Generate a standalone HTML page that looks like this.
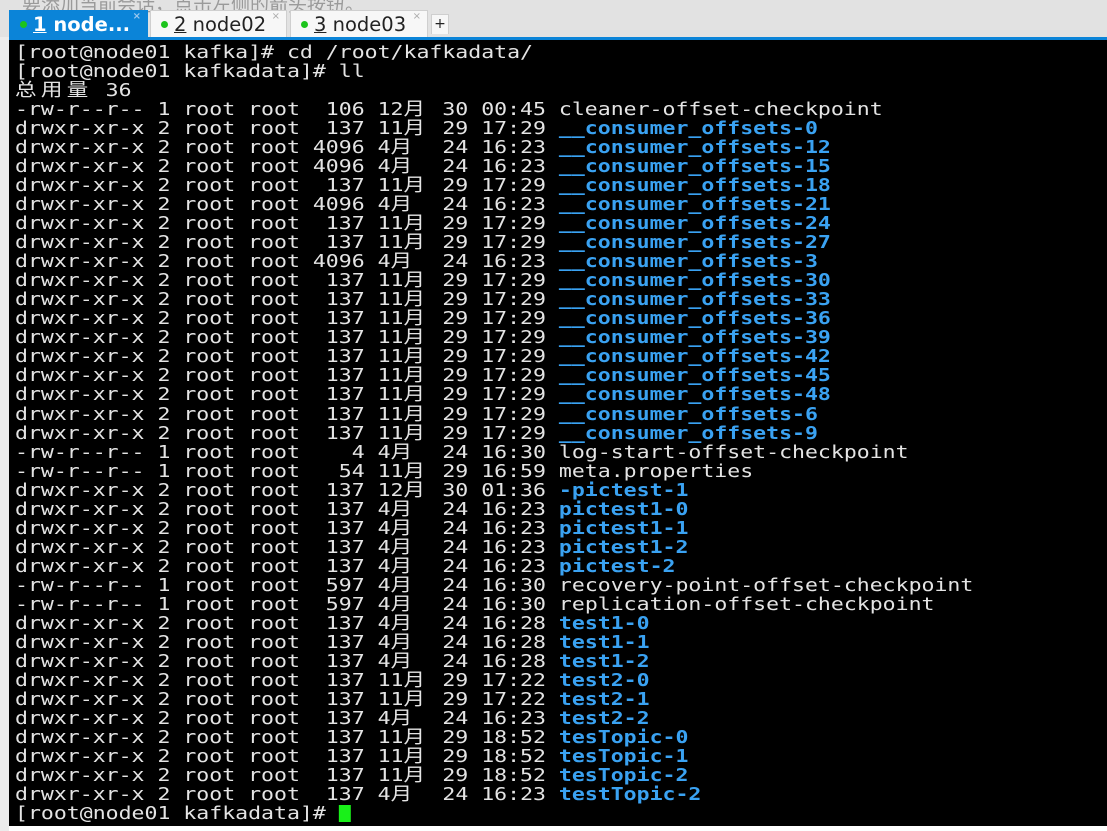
<!DOCTYPE html>
<html><head><meta charset="utf-8"><style>
body{margin:0;width:1107px;height:831px;overflow:hidden;background:#f4f4f4;position:relative;font-family:"DejaVu Sans","Noto Sans CJK SC",sans-serif}
#top{position:absolute;left:0;top:0;width:1107px;height:37px;background:#e2e2e2}
#hint{position:absolute;left:22px;top:-10px;font-size:19px;color:#9a9a9a;white-space:nowrap}
#left{position:absolute;left:0;top:37px;width:9px;height:794px;background:#ececec}
.tab{position:absolute;top:10px;height:27px;background:#f7f7f7;border:1px solid #cfcfcf;border-bottom:none;box-sizing:border-box;font-size:19.5px;color:#222;line-height:28px;white-space:nowrap}
.tab .dot{display:inline-block;width:7px;height:7px;border-radius:50%;background:#1cc41c;margin:0 6px 3px 10px;vertical-align:middle}
.tab .x{position:absolute;right:6px;top:-8px;font-size:10px;color:#aaa}
.tab.act{background:#0b84d8;color:#fff;font-weight:bold;border-color:#0b84d8}
.tab.act .x{color:#9cc8ee}
#bl{position:absolute;left:9px;top:37px;width:1098px;height:3px;background:#0b84d8}
#term{position:absolute;left:9px;top:40px;width:1098px;height:786px;background:#000}
#bot{position:absolute;left:9px;top:826px;width:1098px;height:5px;background:#fff}
.l{position:absolute;left:15px;white-space:pre;font-family:"DejaVu Sans Mono","Noto Sans CJK SC",monospace;font-size:18px;line-height:19px;color:#e4e4e4;transform:scaleX(1.195);transform-origin:0 0}
.m{display:inline-block;width:21.68px;text-align:left}
.b{color:#3aa2f2;font-weight:bold}
.cur{display:inline-block;width:10px;height:17px;background:#19f019;vertical-align:-3px}
</style></head><body>
<div id="top"><div id="hint">要添加当前会话，点击左侧的箭头按钮。</div></div>
<div id="left"></div>
<div class="tab act" style="left:9px;width:139px"><span class="dot"></span><u>1</u> node...<span class="x">×</span></div>
<div class="tab" style="left:150px;width:137px"><span class="dot"></span><u>2</u> node02<span class="x">×</span></div>
<div class="tab" style="left:290px;width:138px"><span class="dot"></span><u>3</u> node03<span class="x">×</span></div>
<div class="tab" style="left:431px;width:18px;top:14px;height:20px;line-height:18px;font-size:14px;text-align:center">+</div>
<div id="bl"></div>
<div id="term"></div>
<div id="bot"></div>
<div id="lines"></div>
<script>
var L=[
"[root@node01 kafka]# cd /root/kafkadata/",
"[root@node01 kafkadata]# ll",
"总用量 36",
"-rw-r--r-- 1 root root  106 12月 30 00:45 |cleaner-offset-checkpoint",
"drwxr-xr-x 2 root root  137 11月 29 17:29 #__consumer_offsets-0",
"drwxr-xr-x 2 root root 4096 4月  24 16:23 #__consumer_offsets-12",
"drwxr-xr-x 2 root root 4096 4月  24 16:23 #__consumer_offsets-15",
"drwxr-xr-x 2 root root  137 11月 29 17:29 #__consumer_offsets-18",
"drwxr-xr-x 2 root root 4096 4月  24 16:23 #__consumer_offsets-21",
"drwxr-xr-x 2 root root  137 11月 29 17:29 #__consumer_offsets-24",
"drwxr-xr-x 2 root root  137 11月 29 17:29 #__consumer_offsets-27",
"drwxr-xr-x 2 root root 4096 4月  24 16:23 #__consumer_offsets-3",
"drwxr-xr-x 2 root root  137 11月 29 17:29 #__consumer_offsets-30",
"drwxr-xr-x 2 root root  137 11月 29 17:29 #__consumer_offsets-33",
"drwxr-xr-x 2 root root  137 11月 29 17:29 #__consumer_offsets-36",
"drwxr-xr-x 2 root root  137 11月 29 17:29 #__consumer_offsets-39",
"drwxr-xr-x 2 root root  137 11月 29 17:29 #__consumer_offsets-42",
"drwxr-xr-x 2 root root  137 11月 29 17:29 #__consumer_offsets-45",
"drwxr-xr-x 2 root root  137 11月 29 17:29 #__consumer_offsets-48",
"drwxr-xr-x 2 root root  137 11月 29 17:29 #__consumer_offsets-6",
"drwxr-xr-x 2 root root  137 11月 29 17:29 #__consumer_offsets-9",
"-rw-r--r-- 1 root root    4 4月  24 16:30 |log-start-offset-checkpoint",
"-rw-r--r-- 1 root root   54 11月 29 16:59 |meta.properties",
"drwxr-xr-x 2 root root  137 12月 30 01:36 #-pictest-1",
"drwxr-xr-x 2 root root  137 4月  24 16:23 #pictest1-0",
"drwxr-xr-x 2 root root  137 4月  24 16:23 #pictest1-1",
"drwxr-xr-x 2 root root  137 4月  24 16:23 #pictest1-2",
"drwxr-xr-x 2 root root  137 4月  24 16:23 #pictest-2",
"-rw-r--r-- 1 root root  597 4月  24 16:30 |recovery-point-offset-checkpoint",
"-rw-r--r-- 1 root root  597 4月  24 16:30 |replication-offset-checkpoint",
"drwxr-xr-x 2 root root  137 4月  24 16:28 #test1-0",
"drwxr-xr-x 2 root root  137 4月  24 16:28 #test1-1",
"drwxr-xr-x 2 root root  137 4月  24 16:28 #test1-2",
"drwxr-xr-x 2 root root  137 11月 29 17:22 #test2-0",
"drwxr-xr-x 2 root root  137 11月 29 17:22 #test2-1",
"drwxr-xr-x 2 root root  137 4月  24 16:23 #test2-2",
"drwxr-xr-x 2 root root  137 11月 29 18:52 #tesTopic-0",
"drwxr-xr-x 2 root root  137 11月 29 18:52 #tesTopic-1",
"drwxr-xr-x 2 root root  137 11月 29 18:52 #tesTopic-2",
"drwxr-xr-x 2 root root  137 4月  24 16:23 #testTopic-2",
"[root@node01 kafkadata]# @"
];
function esc(s){return s.replace(/&/g,"&amp;").replace(/</g,"&lt;")}
var h="";
L.forEach(function(s,i){
  var tail="",head=s;
  if(s.endsWith("@")){head=s.slice(0,-1);tail='<span class="cur"></span>';}
  else{var j=s.lastIndexOf(" ")+1;var c=s[j];if(c=="#"||c=="|"){head=s.slice(0,j);var n=s.slice(j+1);tail=c=="#"?'<span class="b">'+esc(n)+'</span>':esc(n);}}
  head=esc(head);
  if(i>=3&&i<40)head=head.replace(/月/g,'<span class="m">月</span>');
  else if(i==2)head=head.replace("总用量",'<span class="m">总</span><span class="m">用</span><span class="m">量</span>');
  h+='<div class="l" style="top:'+(43+i*19.025).toFixed(1)+'px">'+head+tail+'</div>';
});
document.getElementById("lines").innerHTML=h;
</script>
</body></html>
